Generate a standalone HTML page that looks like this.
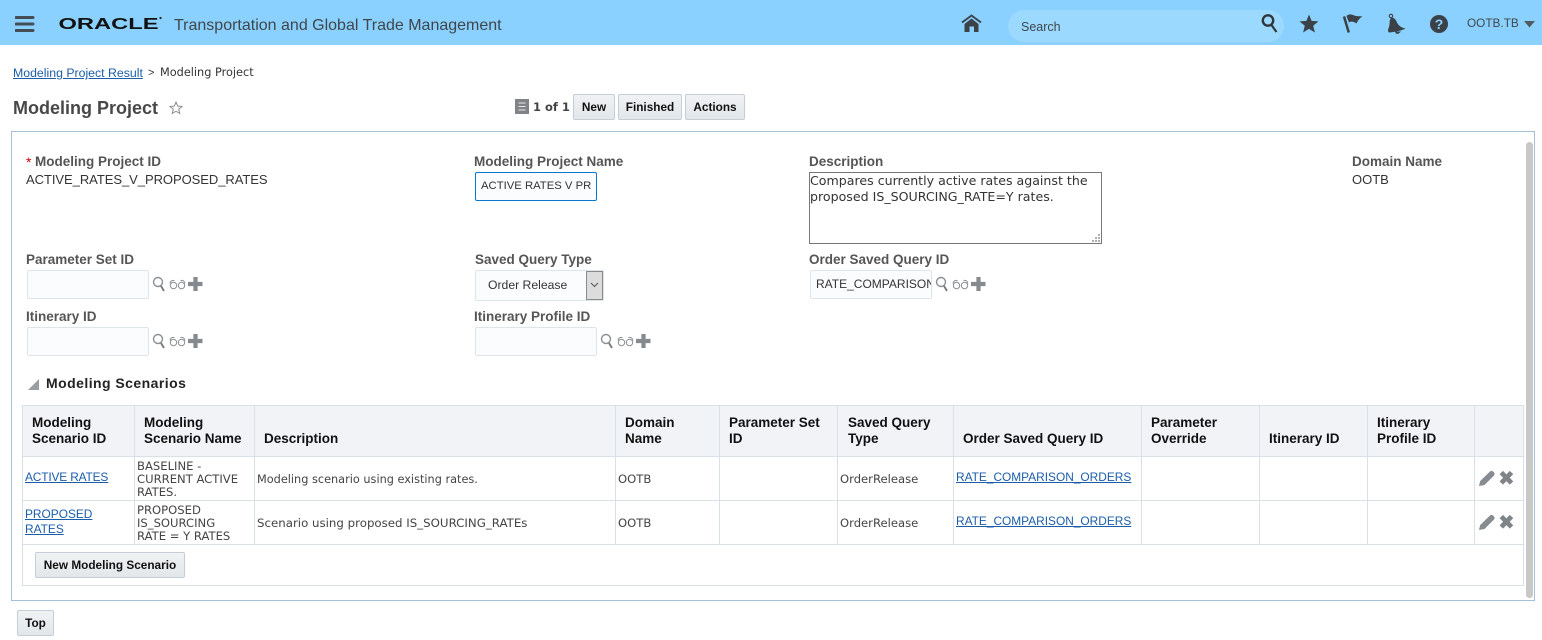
<!DOCTYPE html>
<html><head><meta charset="utf-8"><title>Modeling Project</title>
<style>
html,body{margin:0;padding:0;background:#fff}
body{width:1542px;height:640px;position:relative;overflow:hidden;font-family:"Liberation Sans",sans-serif;color:#333}
.a,.l,.v,.d,.i,.btn,.h,.c,.ln,svg.ic{position:absolute}
.a{white-space:nowrap}
.l{font-weight:bold;font-size:13.5px;line-height:16px;color:#555;white-space:nowrap}
.v{font-size:13px;line-height:16px;color:#333;white-space:nowrap}
.d{font-family:"DejaVu Sans",sans-serif;font-size:11.6px;line-height:15px;color:#444;white-space:nowrap}
.i{box-sizing:border-box;border:1px solid #dde5ec;background:#fbfcfe;border-radius:2px;height:29px;width:122px;font-size:12px;line-height:27px;color:#333;overflow:hidden;white-space:nowrap}
.btn{box-sizing:border-box;height:26px;border:1px solid #c4ced7;border-radius:2px;background:linear-gradient(#f0f2f4,#e3e7ea);font-weight:bold;font-size:11.8px;line-height:24px;color:#111;text-align:center;white-space:nowrap}
.h{font-weight:bold;font-size:13.5px;line-height:16px;color:#111;white-space:nowrap}
.lk{color:#1b5da8;text-decoration:underline;font-size:11.9px;white-space:nowrap}
.ln{background:#d9e1e8}
</style></head><body>

<!-- header -->
<div class="a" style="left:0;top:0;width:1542px;height:45px;background:#8bd1ff"></div>
<svg class="ic" style="left:15px;top:16px" width="20" height="16"><path d="M1 1.500h17M1 8h17M1 14.500h17" stroke="#444c54" stroke-width="3" stroke-linecap="round" fill="none"/></svg>
<svg class="ic" style="left:58px;top:14px" width="106" height="18" viewBox="0 0 106 18">
<text x="0.500" y="15" font-family="Liberation Sans" font-weight="bold" font-size="16" fill="#111" textLength="100" lengthAdjust="spacingAndGlyphs">ORACLE</text>
<circle cx="102.500" cy="4" r="1.100" fill="#222"/></svg>
<div class="a" style="left:174px;top:15.500px;font-size:16px;line-height:20px;color:#3f464c">Transportation and Global Trade Management</div>

<svg class="ic" style="left:960px;top:14px" width="23" height="20" viewBox="0 0 23 20"><path d="M2 8.500 11.500 1.500 21 8.500" fill="none" stroke="#3a4147" stroke-width="1.800"/><path d="M4.500 10 11.500 4.500 18.500 10V18H14V12.500H9.500V18H4.500z" fill="#3a4147"/></svg>
<div class="a" style="left:1008px;top:10px;width:276px;height:32px;background:#9cd9ff;border-radius:16px"></div>
<div class="a" style="left:1021px;top:19px;font-size:12.500px;line-height:16px;color:#3f464c">Search</div>
<svg class="ic" style="left:1260px;top:13px" width="20" height="21" viewBox="0 0 20 21"><circle cx="8" cy="7.500" r="5.200" fill="none" stroke="#2f363c" stroke-width="2.400"/><path d="M11.500 12l5 7" stroke="#2f363c" stroke-width="2.200"/></svg>
<svg class="ic" style="left:1299px;top:14px" width="20" height="19" viewBox="0 0 20 19"><path d="M10 .5l2.600 6.400 6.900.5-5.300 4.400 1.700 6.700L10 14.900l-5.900 3.600 1.700-6.700L.5 7.400l6.900-.5z" fill="#3a4147"/></svg>
<svg class="ic" style="left:1342px;top:12px" width="22" height="22" viewBox="0 0 22 22"><path d="M2 4.500 6.800 20.500" stroke="#3a4147" stroke-width="2.500" fill="none"/><path d="M4.500 4C7 1.500 10 2.500 12 3.500 15 4.500 18 4 20.500 4.500 17.500 6 15.500 9 14.500 11.500 12 9.500 9 9 7 10.500Z" fill="#3a4147"/></svg>
<svg class="ic" style="left:1386px;top:13px" width="21" height="21" viewBox="0 0 21 21"><circle cx="5" cy="3" r="1.700" fill="none" stroke="#3a4147" stroke-width="1.100"/><path d="M5 5C8 4 10 7 11 9.500 12.500 12.500 15 14.500 19.500 15.500 16 17.500 11 18.500 3 19.500 1.500 18.500 2 16 3 14 4 11 3 7 5 5Z" fill="#3a4147"/><path d="M9 18.500h6l-2.500 2.200H10z" fill="#3a4147"/></svg>
<svg class="ic" style="left:1429px;top:14px" width="20" height="20" viewBox="0 0 20 20"><circle cx="10" cy="10" r="9" fill="#3a4147"/><text x="10" y="15" text-anchor="middle" font-family="Liberation Sans" font-weight="bold" font-size="14" fill="#8bd1ff">?</text></svg>
<div class="a" style="left:1467px;top:16px;font-size:11.800px;line-height:15px;color:#3f464c">OOTB.TB</div>
<svg class="ic" style="left:1524px;top:21px" width="11" height="7"><path d="M0 0h11L5.500 6.500z" fill="#4f5a62"/></svg>

<!-- breadcrumb + title -->
<div class="a" style="left:13px;top:66px;font-size:12.300px;line-height:14px"><span style="color:#1b5da8;text-decoration:underline">Modeling Project Result</span></div>
<div class="a" style="left:148px;top:66px;font-size:11px;line-height:14px;color:#333">&gt;</div>
<div class="d" style="left:160px;top:66px;line-height:14px;color:#333;font-size:11.300px">Modeling Project</div>
<div class="a" style="left:13px;top:98px;font-size:18px;line-height:21px;font-weight:bold;color:#484848">Modeling Project</div>
<svg class="ic" style="left:169px;top:101px" width="14" height="14" viewBox="0 0 14 14"><path d="M7 1l1.700 4.100 4.300.3-3.300 2.800 1.100 4.300L7 10.200l-3.800 2.300 1.100-4.300L1 5.400l4.300-.3z" fill="none" stroke="#8b8f93"/></svg>

<!-- toolbar -->
<div class="a" style="left:515px;top:99px;width:14px;height:15px;background:#808488"></div>
<svg class="ic" style="left:515px;top:99px" width="14" height="15"><path d="M3.500 4h7M3.500 7.500h7M3.500 11h7" stroke="#e8e8e8" stroke-width="1"/></svg>
<div class="a" style="left:533px;top:100px;font-family:'DejaVu Sans',sans-serif;font-weight:bold;font-size:11.500px;line-height:15px;color:#444">1 of 1</div>
<div class="btn" style="left:573px;top:94px;width:42px">New</div>
<div class="btn" style="left:618px;top:94px;width:64px">Finished</div>
<div class="btn" style="left:685px;top:94px;width:60px">Actions</div>

<!-- box -->
<div class="a" style="box-sizing:border-box;left:11px;top:131px;width:1524px;height:470px;border:1px solid #a6bfd8"></div>
<div class="a" style="left:1526px;top:142px;width:7px;height:456px;background:#c8c8c8;border-radius:4px"></div>

<!-- form row 1 -->
<div class="a" style="left:26px;top:154px;font-size:14px;line-height:16px;color:#c00">*</div>
<div class="l" style="left:35px;top:154px">Modeling Project ID</div>
<div class="v" style="left:26px;top:172px;letter-spacing:-.05px">ACTIVE_RATES_V_PROPOSED_RATES</div>
<div class="l" style="left:474px;top:154px">Modeling Project Name</div>
<div class="i" style="left:475px;top:172px;border:1px solid #0a77d0;padding-left:5px;line-height:26px;font-size:11.300px">ACTIVE RATES V PR</div>
<div class="l" style="left:809px;top:154px">Description</div>
<div class="a" style="box-sizing:border-box;left:809px;top:172px;width:293px;height:72px;border:1px solid #777;background:#fff"></div>
<div class="a" style="left:810px;top:173px;font-family:'DejaVu Sans',sans-serif;font-size:12.600px;line-height:16px;color:#333">Compares currently active rates against the<br>proposed IS_SOURCING_RATE=Y rates.</div>
<svg class="ic" style="left:1091px;top:233px" width="10" height="10"><path d="M7 1h2v2H7zM4 4h2v2H4zM7 4h2v2H7zM1 7h2v2H1zM4 7h2v2H4zM7 7h2v2H7z" fill="#b0b0b0"/></svg>
<div class="l" style="left:1352px;top:154px">Domain Name</div>
<div class="v" style="left:1352px;top:172px">OOTB</div>

<!-- form row 2 -->
<div class="l" style="left:26px;top:252px">Parameter Set ID</div>
<div class="i" style="left:27px;top:270px"></div>
<svg class="ic" style="left:152px;top:276px" width="54" height="18" viewBox="0 0 54 18"><circle cx="6" cy="6" r="4.500" fill="none" stroke="#8a8f93" stroke-width="1.400"/><path d="M9 10l3 5" stroke="#777" stroke-width="1.800"/><g fill="none" stroke="#8a8f93"><circle cx="21.500" cy="9.500" r="3.200"/><circle cx="29.500" cy="9.500" r="3.200"/><path d="M18 7.500C18.500 5 20 4 22.500 4.500M33 7.500C32.500 5 31 4 28.500 4.500"/></g><path d="M36 8h14.500M43.500 1v14" stroke="#858a8e" stroke-width="4.200"/></svg>
<div class="l" style="left:475px;top:252px">Saved Query Type</div>
<div class="i" style="left:475px;top:270px;width:129px;height:31px;line-height:28px;padding-left:12px;font-size:12.200px">Order Release</div>
<div class="a" style="box-sizing:border-box;left:586px;top:271px;width:17px;height:29px;background:#dcdcdc;border:1px solid #8a8a8a"></div>
<svg class="ic" style="left:590px;top:282px" width="9" height="6"><path d="M1 1l3.500 3.500L8 1" fill="none" stroke="#555"/></svg>
<div class="l" style="left:809px;top:252px">Order Saved Query ID</div>
<div class="i" style="left:810px;top:270px;padding-left:5px;font-size:12px">RATE_COMPARISON_ORDERS</div>
<svg class="ic" style="left:935px;top:276px" width="54" height="18" viewBox="0 0 54 18"><circle cx="6" cy="6" r="4.500" fill="none" stroke="#8a8f93" stroke-width="1.400"/><path d="M9 10l3 5" stroke="#777" stroke-width="1.800"/><g fill="none" stroke="#8a8f93"><circle cx="21.500" cy="9.500" r="3.200"/><circle cx="29.500" cy="9.500" r="3.200"/><path d="M18 7.500C18.500 5 20 4 22.500 4.500M33 7.500C32.500 5 31 4 28.500 4.500"/></g><path d="M36 8h14.500M43.500 1v14" stroke="#858a8e" stroke-width="4.200"/></svg>

<!-- form row 3 -->
<div class="l" style="left:26px;top:309px">Itinerary ID</div>
<div class="i" style="left:27px;top:327px"></div>
<svg class="ic" style="left:152px;top:333px" width="54" height="18" viewBox="0 0 54 18"><circle cx="6" cy="6" r="4.500" fill="none" stroke="#8a8f93" stroke-width="1.400"/><path d="M9 10l3 5" stroke="#777" stroke-width="1.800"/><g fill="none" stroke="#8a8f93"><circle cx="21.500" cy="9.500" r="3.200"/><circle cx="29.500" cy="9.500" r="3.200"/><path d="M18 7.500C18.500 5 20 4 22.500 4.500M33 7.500C32.500 5 31 4 28.500 4.500"/></g><path d="M36 8h14.500M43.500 1v14" stroke="#858a8e" stroke-width="4.200"/></svg>
<div class="l" style="left:474px;top:309px">Itinerary Profile ID</div>
<div class="i" style="left:475px;top:327px"></div>
<svg class="ic" style="left:600px;top:333px" width="54" height="18" viewBox="0 0 54 18"><circle cx="6" cy="6" r="4.500" fill="none" stroke="#8a8f93" stroke-width="1.400"/><path d="M9 10l3 5" stroke="#777" stroke-width="1.800"/><g fill="none" stroke="#8a8f93"><circle cx="21.500" cy="9.500" r="3.200"/><circle cx="29.500" cy="9.500" r="3.200"/><path d="M18 7.500C18.500 5 20 4 22.500 4.500M33 7.500C32.500 5 31 4 28.500 4.500"/></g><path d="M36 8h14.500M43.500 1v14" stroke="#858a8e" stroke-width="4.200"/></svg>

<!-- section -->
<svg class="ic" style="left:28px;top:379px" width="11" height="11"><path d="M11 0v11H0z" fill="#9a9ea2"/></svg>
<div class="a" style="left:46px;top:375px;font-size:14px;line-height:16px;font-weight:bold;color:#222;letter-spacing:.45px">Modeling Scenarios</div>

<!-- table -->
<div class="a" style="left:22px;top:405px;width:1502px;height:51px;background:#f1f3f7"></div>
<div class="ln" style="left:22px;top:405px;width:1502px;height:1px"></div>
<div class="ln" style="left:22px;top:456px;width:1502px;height:1px"></div>
<div class="ln" style="left:22px;top:500px;width:1502px;height:1px"></div>
<div class="ln" style="left:22px;top:544px;width:1502px;height:1px"></div>
<div class="ln" style="left:22px;top:585px;width:1502px;height:1px"></div>
<div class="ln" style="left:22px;top:405px;width:1px;height:181px"></div>
<div class="ln" style="left:1523px;top:405px;width:1px;height:181px"></div>
<div class="ln" style="left:134px;top:405px;width:1px;height:140px"></div>
<div class="ln" style="left:254px;top:405px;width:1px;height:140px"></div>
<div class="ln" style="left:615px;top:405px;width:1px;height:140px"></div>
<div class="ln" style="left:719px;top:405px;width:1px;height:140px"></div>
<div class="ln" style="left:837px;top:405px;width:1px;height:140px"></div>
<div class="ln" style="left:953px;top:405px;width:1px;height:140px"></div>
<div class="ln" style="left:1141px;top:405px;width:1px;height:140px"></div>
<div class="ln" style="left:1259px;top:405px;width:1px;height:140px"></div>
<div class="ln" style="left:1367px;top:405px;width:1px;height:140px"></div>
<div class="ln" style="left:1474px;top:405px;width:1px;height:140px"></div>

<div class="h" style="left:32px;top:415px">Modeling<br>Scenario ID</div>
<div class="h" style="left:144px;top:415px">Modeling<br>Scenario Name</div>
<div class="h" style="left:264px;top:431px">Description</div>
<div class="h" style="left:625px;top:415px">Domain<br>Name</div>
<div class="h" style="left:729px;top:415px">Parameter Set<br>ID</div>
<div class="h" style="left:848px;top:415px">Saved Query<br>Type</div>
<div class="h" style="left:963px;top:431px">Order Saved Query ID</div>
<div class="h" style="left:1151px;top:415px">Parameter<br>Override</div>
<div class="h" style="left:1269px;top:431px">Itinerary ID</div>
<div class="h" style="left:1377px;top:415px">Itinerary<br>Profile ID</div>

<div class="a lk" style="left:25px;top:470px;line-height:15px;letter-spacing:-.15px">ACTIVE RATES</div>
<div class="d" style="left:137px;top:460px;line-height:13px">BASELINE -<br>CURRENT ACTIVE<br>RATES.</div>
<div class="d" style="left:257px;top:472px;font-size:11.300px">Modeling scenario using existing rates.</div>
<div class="d" style="left:618px;top:472px">OOTB</div>
<div class="d" style="left:840px;top:472px">OrderRelease</div>
<div class="a lk" style="left:956px;top:470px;line-height:15px">RATE_COMPARISON_ORDERS</div>

<div class="a lk" style="left:25px;top:507px;line-height:15px">PROPOSED<br>RATES</div>
<div class="d" style="left:137px;top:504px;line-height:13px">PROPOSED<br>IS_SOURCING<br>RATE = Y RATES</div>
<div class="d" style="left:257px;top:516px;font-size:11.800px">Scenario using proposed IS_SOURCING_RATEs</div>
<div class="d" style="left:618px;top:516px">OOTB</div>
<div class="d" style="left:840px;top:516px">OrderRelease</div>
<div class="a lk" style="left:956px;top:514px;line-height:15px">RATE_COMPARISON_ORDERS</div>

<svg class="ic" style="left:1479px;top:470px" width="36" height="17" viewBox="0 0 36 17"><path d="M0 16l1.200-5L11 1.500c1-.8 2-.8 3 0l1 1c.8 1 .8 2 0 3L5.500 15z" fill="#878c90"/><path d="M22.300 2.500 32.500 13M32.500 2.500 22.300 13" stroke="#7e8488" stroke-width="4.800" fill="none"/></svg>
<svg class="ic" style="left:1479px;top:514px" width="36" height="17" viewBox="0 0 36 17"><path d="M0 16l1.200-5L11 1.500c1-.8 2-.8 3 0l1 1c.8 1 .8 2 0 3L5.500 15z" fill="#878c90"/><path d="M22.300 2.500 32.500 13M32.500 2.500 22.300 13" stroke="#7e8488" stroke-width="4.800" fill="none"/></svg>

<div class="btn" style="left:35px;top:552px;width:150px">New Modeling Scenario</div>
<div class="btn" style="left:17px;top:610px;width:37px">Top</div>
</body></html>
